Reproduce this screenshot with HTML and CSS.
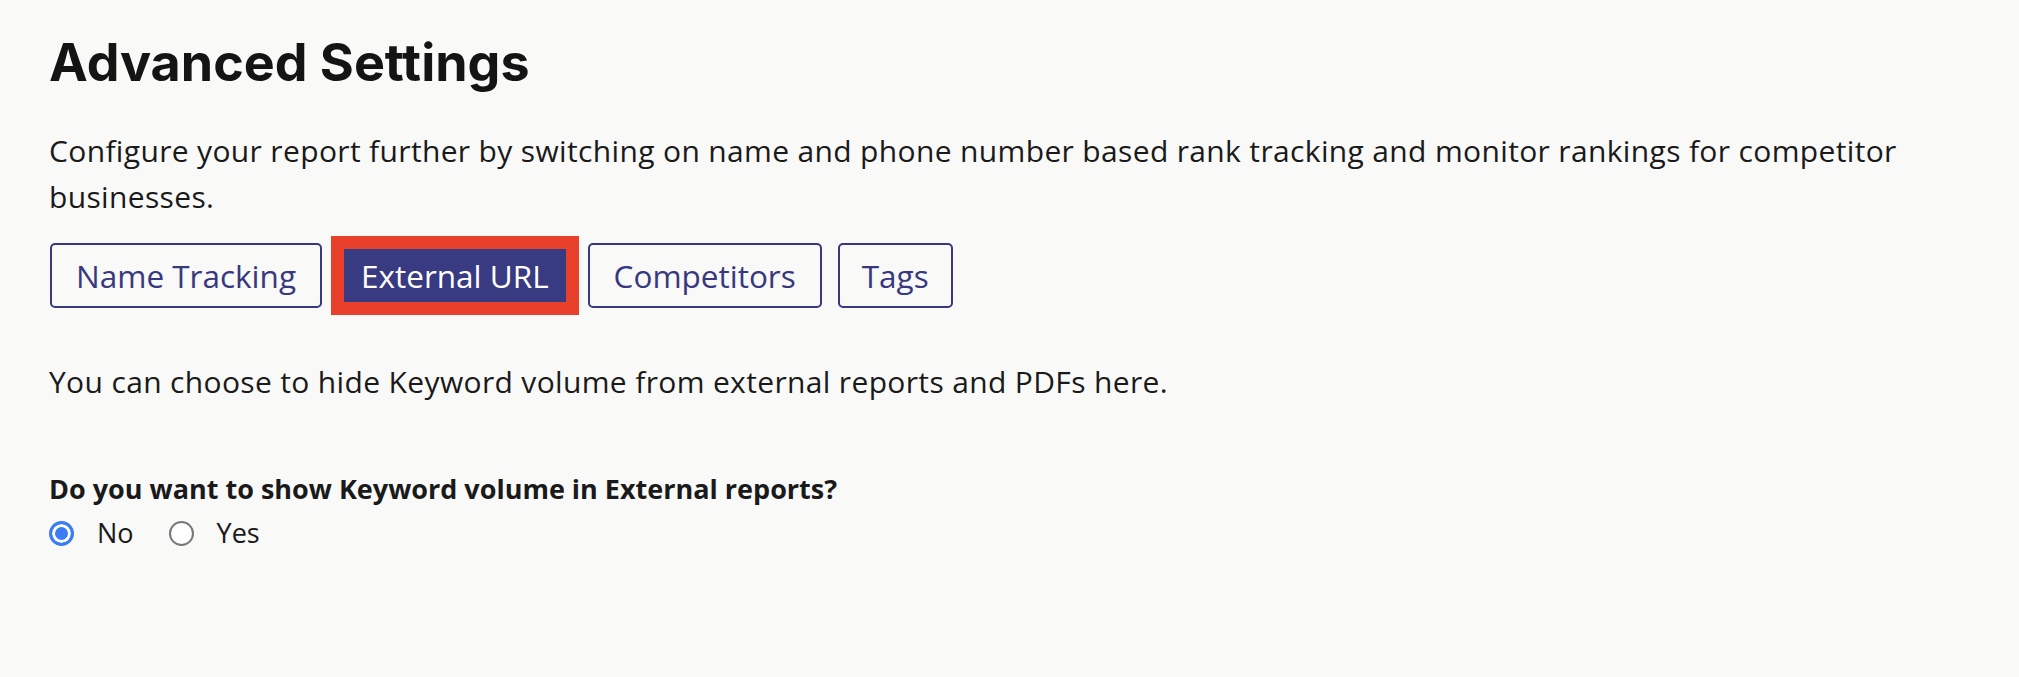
FILE: index.html
```html
<!DOCTYPE html>
<html lang="en">
<head>
    <meta charset="UTF-8">
    <meta name="viewport" content="width=device-width, initial-scale=1.0">
    <title>Advanced Settings</title>
    <link rel="stylesheet" href="styles.css">
</head>
<body>
    <main class="settings">
        <h1 class="settings-title">Advanced Settings</h1>
        <p class="settings-intro">Configure your report further by switching on name and phone number based rank tracking and monitor rankings for competitor businesses.</p>

        <div class="tabs">
            <button class="tab" type="button">Name Tracking</button>
            <button class="tab active" type="button">External URL</button>
            <button class="tab" type="button">Competitors</button>
            <button class="tab small" type="button">Tags</button>
        </div>

        <p class="tab-text">You can choose to hide Keyword volume from external reports and PDFs here.</p>

        <div class="question">
            <p class="question-label">Do you want to show Keyword volume in External reports?</p>
            <div class="choices">
                <label class="choice"><input type="radio" name="volume" value="no" checked> No</label>
                <label class="choice"><input type="radio" name="volume" value="yes"> Yes</label>
            </div>
        </div>
    </main>
</body>
</html>
```

FILE: styles.css
```css
/* Page */
body {
    margin: 0;
    background: #f9f9f8;
    color: #1a1a1a;
    font-family: "Open Sans", Arial, sans-serif;
}

.settings {
    padding: 33px 49px 40px;
}

/* Heading */
.settings-title {
    margin: 0;
    font-family: Inter, "Liberation Sans", sans-serif;
    font-weight: 700;
    font-size: 52px;
    line-height: 60px;
    color: #141414;
}

/* Text */
.settings-intro,
.tab-text {
    margin: 35px 0 0;
    font-size: 30px;
    letter-spacing: 0.35px;
    line-height: 46px;
}

.tab-text {
    margin-top: 51px;
}

/* Tabs */
.tabs {
    display: flex;
    gap: 16px;
    margin-top: 23px;
    padding-left: 1px;
}

.tab {
    padding: 0 24px;
    height: 65px;
    border: 2px solid #37387f;
    border-radius: 5px;
    background: #f9f9f8;
    color: #37387f;
    font-family: "Open Sans", Arial, sans-serif;
    font-size: 31.5px;
    cursor: pointer;
}

.tab.active {
    padding: 0 21px;
    background: #383a82;
    color: #fff;
    border-radius: 0;
    outline: 13px solid #e8402a;
    outline-offset: -6px;
}

.tab.small {
    padding: 0 22px;
}

/* Question */
.question-label {
    margin: 66px 0 0;
    font-size: 27px;
    line-height: 36px;
    font-weight: 700;
}

.choices {
    display: flex;
    gap: 35px;
    margin-top: 8px;
}

.choice {
    display: flex;
    align-items: center;
    gap: 23px;
    font-size: 27px;
    line-height: 36px;
}

.choice input {
    appearance: none;
    -webkit-appearance: none;
    margin: 0;
    width: 25px;
    height: 25px;
    border: 2px solid #777;
    border-radius: 50%;
    background: #fff;
}

.choice input:checked {
    border: 3px solid #3b7bf5;
    box-shadow: inset 0 0 0 3px #fff;
    background: #3b7bf5;
}
```
